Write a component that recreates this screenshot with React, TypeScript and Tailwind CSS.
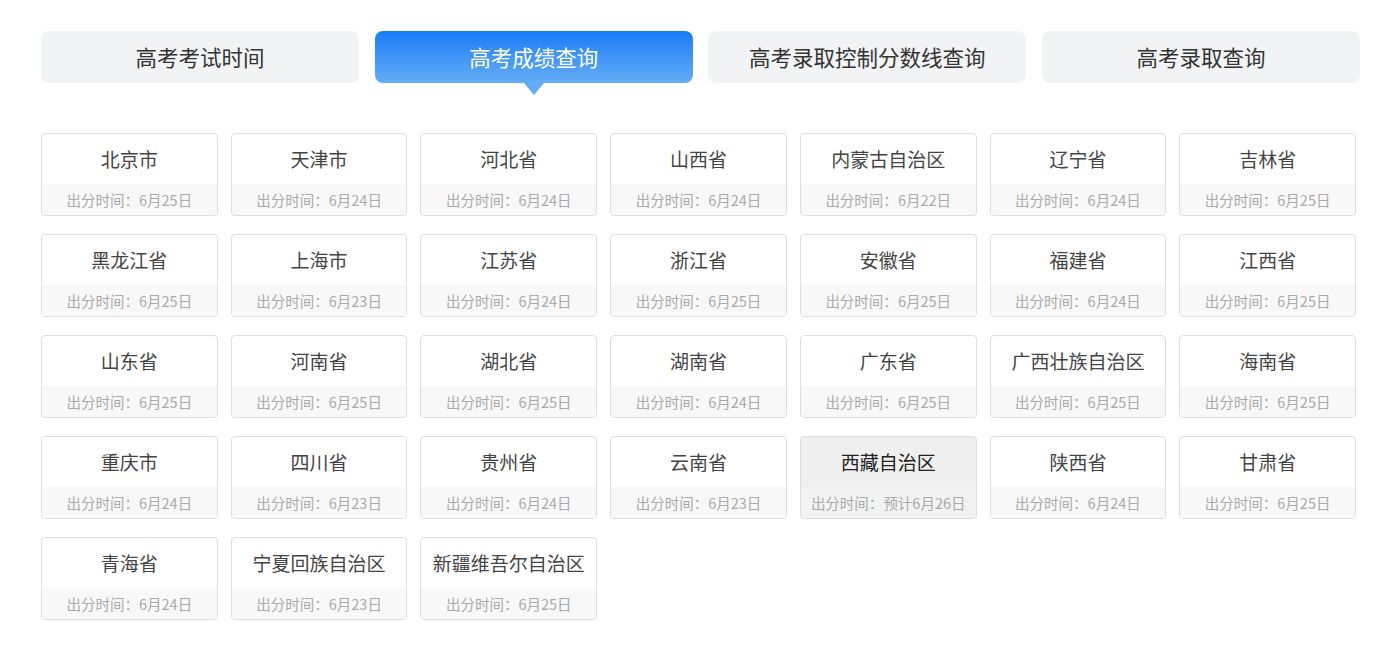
const tabs = ['高考考试时间', '高考成绩查询', '高考录取控制分数线查询', '高考录取查询']

const provinces: [string, string][] = [
  ['北京市', '6月25日'], ['天津市', '6月24日'], ['河北省', '6月24日'], ['山西省', '6月24日'],
  ['内蒙古自治区', '6月22日'], ['辽宁省', '6月24日'], ['吉林省', '6月25日'],
  ['黑龙江省', '6月25日'], ['上海市', '6月23日'], ['江苏省', '6月24日'], ['浙江省', '6月25日'],
  ['安徽省', '6月25日'], ['福建省', '6月24日'], ['江西省', '6月25日'],
  ['山东省', '6月25日'], ['河南省', '6月25日'], ['湖北省', '6月25日'], ['湖南省', '6月24日'],
  ['广东省', '6月25日'], ['广西壮族自治区', '6月25日'], ['海南省', '6月25日'],
  ['重庆市', '6月24日'], ['四川省', '6月23日'], ['贵州省', '6月24日'], ['云南省', '6月23日'],
  ['西藏自治区', '预计6月26日'], ['陕西省', '6月24日'], ['甘肃省', '6月25日'],
  ['青海省', '6月24日'], ['宁夏回族自治区', '6月23日'], ['新疆维吾尔自治区', '6月25日'],
]

export default function App() {
  return (
    <div className="min-h-screen bg-white pt-[31px] pl-[41px] font-['Microsoft_YaHei','Noto_Sans_CJK_SC',sans-serif]">
      {/* tabs */}
      <div className="grid w-[1319px] grid-cols-4 gap-[15.6px]">
        {tabs.map((t, i) =>
          i === 1 ? (
            <div key={t} className="relative flex h-[52px] items-center justify-center rounded-lg bg-gradient-to-b from-[#137cf6] to-[#64acf6] text-[21.5px] text-white">
              {t}
              <span className="absolute left-1/2 top-full -ml-[10px] h-0 w-0 border-x-[10px] border-t-[12px] border-x-transparent border-t-[#64acf6]" />
            </div>
          ) : (
            <div key={t} className="flex h-[52px] items-center justify-center rounded-lg bg-[#f2f3f5] text-[21.5px] text-[#333]">
              {t}
            </div>
          )
        )}
      </div>

      {/* province cards */}
      <div className="mt-[50px] grid w-[1315px] grid-cols-7 gap-x-[13px] gap-y-[18px]">
        {provinces.map(([name, date]) => {
          const hover = name === '西藏自治区'
          return (
            <div key={name} className={`overflow-hidden rounded border border-[#dedede] ${hover ? 'bg-[#efefef]' : 'bg-white'}`}>
              <div className={`flex h-[50px] items-center justify-center text-[19px] ${hover ? 'text-[#222]' : 'text-[#444]'}`}>
                {name}
              </div>
              <div className={`flex h-[31px] items-center justify-center text-[14.5px] text-[#aaa] ${hover ? 'bg-[#f2f2f2]' : 'bg-[#f8f8f8]'}`}>
                出分时间：{date}
              </div>
            </div>
          )
        })}
      </div>
    </div>
  )
}
